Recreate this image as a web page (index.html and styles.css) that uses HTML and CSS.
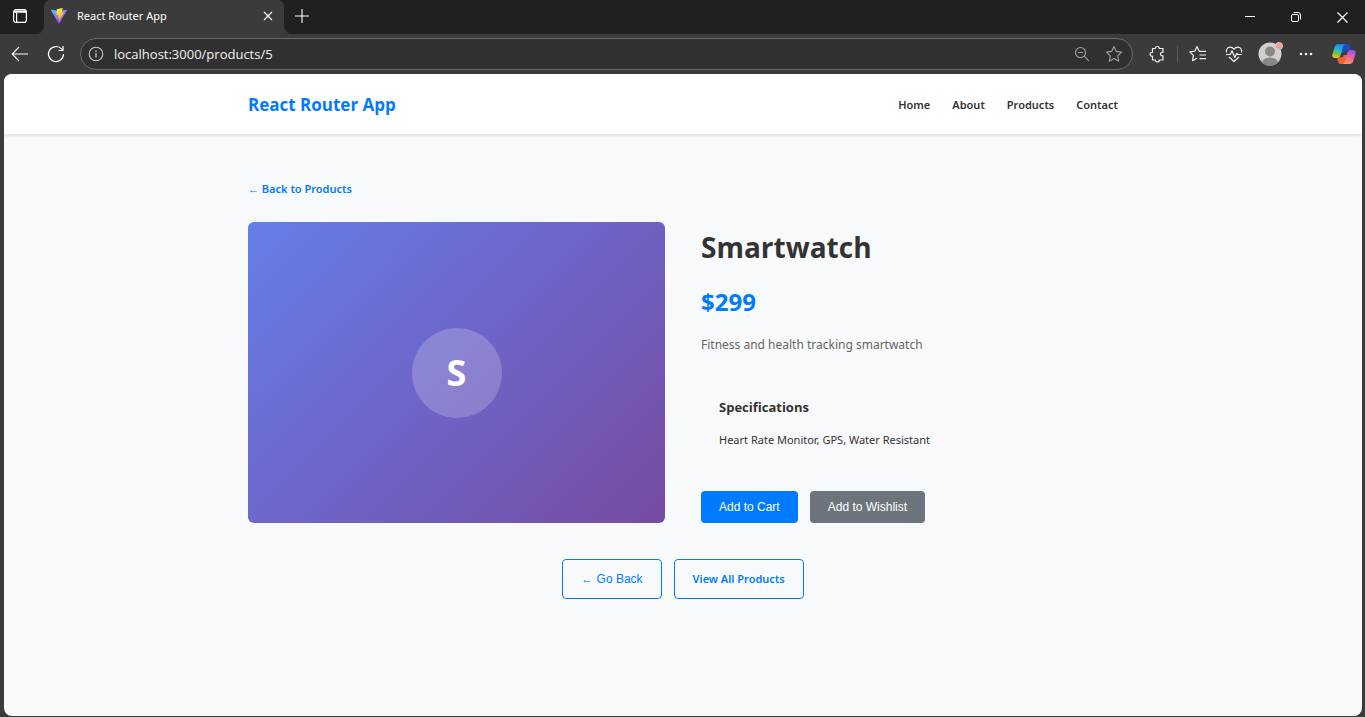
FILE: index.html
```html
<!DOCTYPE html>
<html lang="en">
<head>
<meta charset="utf-8">
<title>React Router App</title>
<link rel="stylesheet" href="styles.css">
</head>
<body>
<div class="browser">
  <div class="tab-strip">
    <button class="icon-button tab-actions" aria-label="Tab actions">
      <svg width="16" height="16" viewBox="0 0 16 16" fill="none" stroke="#fff" stroke-width="1.2"><rect x="1.6" y="1.6" width="12.8" height="12.8" rx="2.5"/><path d="M2 3.2h12M2 4.2h12M4.6 5v9" /></svg>
    </button>
    <div class="tab">
      <svg width="16" height="16" viewBox="0 0 16 16"><defs><linearGradient id="va" x1="0" y1="0" x2=".6" y2="1"><stop offset="0" stop-color="#41d1ff"/><stop offset="1" stop-color="#bd34fe"/></linearGradient><linearGradient id="vb" x1=".4" y1="0" x2=".6" y2="1"><stop offset="0" stop-color="#ffea83"/><stop offset=".2" stop-color="#ffdd35"/><stop offset="1" stop-color="#ffa800"/></linearGradient></defs><path d="M15.8 2.4 8.4 15.6a.4.4 0 0 1-.7 0L.2 2.4c-.2-.3.1-.7.5-.6L8 3.1l7.3-1.3c.4-.1.7.3.5.6z" fill="url(#va)"/><path d="M11.4.1 6 1.2l-.2.2-.4 5.7c0 .2.1.3.3.2l1.5-.3c.2 0 .3.1.3.3L7 9.500c0 .2.1.3.3.3l.9-.3c.2-.1.3.1.3.3l-.7 3.400c-.1.2.2.300.3.1l4.700-9.100c.1-.2-.1-.4-.3-.3l-1.600.3c-.1 0-.3-.1-.2-.3L11.700.4c0-.2-.1-.3-.3-.3z" fill="url(#vb)"/></svg>
      <span class="tab-title">React Router App</span>
      <button class="icon-button" aria-label="Close tab"><svg width="10" height="10" viewBox="0 0 10 10" stroke="#fff" stroke-width="1.2"><path d="m1 1 8 8M9 1 1 9"/></svg></button>
    </div>
    <button class="icon-button new-tab" aria-label="New tab"><svg width="14" height="14" viewBox="0 0 14 14" stroke="#fff" stroke-width="1.1"><path d="M0 7h14M7 0v14"/></svg></button>
    <div class="window-controls">
      <button class="icon-button" aria-label="Minimize"><svg width="10" height="10" viewBox="0 0 10 10" stroke="#fff"><path d="M0 4.500h10"/></svg></button>
      <button class="icon-button" aria-label="Restore"><svg width="10" height="10" viewBox="0 0 10 10" fill="none" stroke="#fff"><rect x=".5" y="2.500" width="7" height="7" rx="1.500"/><path d="M2.500.5H7A2.500 2.500 0 0 1 9.500 3v4.500"/></svg></button>
      <button class="icon-button" aria-label="Close"><svg width="11" height="11" viewBox="0 0 11 11" stroke="#fff" stroke-width="1.200"><path d="m.5.5 10 10M10.500.5l-10 10"/></svg></button>
    </div>
  </div>
  <div class="toolbar">
    <button class="icon-button" aria-label="Back"><svg width="18" height="16" viewBox="0 0 18 16" fill="none" stroke="#fff" stroke-width="1.100"><path d="M17 8H1.500M8 1 1.200 8 8 15"/></svg></button>
    <button class="icon-button" aria-label="Refresh"><svg width="18" height="18" viewBox="0 0 18 18" fill="none" stroke="#fff" stroke-width="1.200"><path d="M16.500 9A7.500 7.500 0 1 1 14.500 3.900L16 5.500M16 1v4.500h-4.500"/></svg></button>
    <div class="address-bar">
      <svg width="16" height="16" viewBox="0 0 16 16" fill="none" stroke="#c8c8c8"><circle cx="8" cy="8" r="6.800" stroke-width="1.100"/><path d="M8 7v4.500M8 4.500V6" stroke-width="1.300"/></svg>
      <input class="address-input" type="text" aria-label="Address" value="localhost:3000/products/5">
      <button class="icon-button" aria-label="Zoom"><svg width="16" height="16" viewBox="0 0 16 16" fill="none" stroke="#a0a0a0" stroke-width="1.100"><circle cx="6.500" cy="6.500" r="5"/><path d="m10.200 10.200 4.600 4.600M4 6.500h5"/></svg></button>
      <button class="icon-button" aria-label="Favorite"><svg width="18" height="18" viewBox="0 0 18 18" fill="none" stroke="#a0a0a0" stroke-width="1.100" stroke-linejoin="round"><path d="m9 1.500 2.300 4.900 5.300.7-3.900 3.700 1 5.400L9 13.600l-4.700 2.600 1-5.400L1.400 7.100l5.300-.7z"/></svg></button>
    </div>
    <div class="toolbar-actions">
      <button class="icon-button" aria-label="Extensions"><svg width="18" height="18" viewBox="0 0 18 18" fill="none" stroke="#f0f0f0" stroke-width="1.200" stroke-linejoin="round"><path d="M4.500 3.500H7.300a2 2 0 0 1 4 0H15v3.700a1.900 1.900 0 1 0 0 3.600v4.200h-3.700a2 2 0 0 1-4 0H4.500v-3.800a2 2 0 1 1 0-3.900z"/></svg></button>
      <span class="divider"></span>
      <button class="icon-button" aria-label="Favorites list"><svg width="18" height="18" viewBox="0 0 18 18" fill="none" stroke="#f0f0f0" stroke-width="1.200" stroke-linejoin="round"><path d="M10.200 6.300 8 1.500 5.800 6.200l-5 .7 3.600 3.500-.8 5.300 4.400-2.400M10 6.300h7M10.500 10h6.500M10.500 13.700h6.500"/></svg></button>
      <button class="icon-button" aria-label="Browser essentials"><svg width="18" height="18" viewBox="0 0 18 18" fill="none" stroke="#f0f0f0" stroke-width="1.200" stroke-linejoin="round"><path d="M1.500 7.500C.8 4.500 2.600 2.200 5 2.200c1.800 0 3 .8 4 2 1-1.200 2.200-2 4-2 2.400 0 4.200 2.300 3.500 5.300M4 12l5 4.500 5-4.500M1 9.500h4.200L7 5.800l2.800 6.700 2-4 1 1H17"/></svg></button>
      <button class="icon-button" aria-label="Profile"><svg width="26" height="24" viewBox="0 0 26 24"><defs><clipPath id="pc"><circle cx="13" cy="12" r="11.500"/></clipPath></defs><circle cx="13" cy="12" r="11.500" fill="#d2d0ce"/><g clip-path="url(#pc)" fill="#8a8886"><circle cx="13" cy="9.500" r="5"/><ellipse cx="13" cy="21" rx="8" ry="5.500"/></g><circle cx="22" cy="4" r="3.500" fill="#ff9a94" stroke="#d2d0ce"/></svg></button>
      <button class="icon-button" aria-label="Settings and more"><svg width="14" height="4" viewBox="0 0 14 4" fill="#f0f0f0"><circle cx="2" cy="2" r="1.300"/><circle cx="7" cy="2" r="1.300"/><circle cx="12" cy="2" r="1.300"/></svg></button>
      <button class="icon-button copilot" aria-label="Copilot"><svg width="24" height="22" viewBox="0 0 24 22"><defs><linearGradient id="ca" x1=".6" y1="0" x2=".3" y2="1"><stop offset="0" stop-color="#1b7df2"/><stop offset=".4" stop-color="#26b3d5"/><stop offset=".7" stop-color="#78be45"/><stop offset="1" stop-color="#f4c20b"/></linearGradient><linearGradient id="cb" x1=".7" y1="0" x2=".3" y2="1"><stop offset="0" stop-color="#9b4eea"/><stop offset=".5" stop-color="#f066a0"/><stop offset="1" stop-color="#ff9a52"/></linearGradient></defs><path d="M11 1h4.500c1.500 0 2 1 2.500 2.500l1 4.000H15c-1.600 0-2.300 1-2.700 2.500L9 10z" fill="#1550c0"/><path d="M13 21H8.500C7 21 6.500 20 6 18.500L5 14.500h4c1.600 0 2.300-1 2.700-2.500H15z" fill="#f25f3a"/><path d="M6.500 1H14c-1.800 0-2.500 1.500-3 3l-2.300 8c-.5 2-1.700 3-3.200 3H3c-2.500 0-3.100-1.500-2.500-4L2.700 4C3.300 2 4.500 1 6.500 1z" fill="url(#ca)"/><path d="M17.500 21H10c1.800 0 2.500-1.500 3-3l2.300-8c.5-2 1.700-3 3.200-3H21c2.500 0 3.100 1.500 2.500 4l-2.200 7c-.6 2-1.800 3-3.800 3z" fill="url(#cb)"/></svg></button>
    </div>
  </div>
  <div class="page">
    <header class="site-header">
      <div class="container header-inner">
        <a class="brand" href="#">React Router App</a>
        <nav class="site-nav">
          <a href="#">Home</a>
          <a href="#">About</a>
          <a href="#">Products</a>
          <a href="#">Contact</a>
        </nav>
      </div>
    </header>
    <main class="container content">
      <a class="back-link" href="#"><span class="arrow">←</span> Back to Products</a>
      <div class="product">
        <div class="product-image"><span class="product-initial">S</span></div>
        <section class="product-info">
          <h1>Smartwatch</h1>
          <p class="price">$299</p>
          <p class="description">Fitness and health tracking smartwatch</p>
          <div class="specs">
            <h2>Specifications</h2>
            <p>Heart Rate Monitor, GPS, Water Resistant</p>
          </div>
          <div class="actions">
            <button class="button button-primary">Add to Cart</button>
            <button class="button button-secondary">Add to Wishlist</button>
          </div>
        </section>
      </div>
      <div class="page-actions">
        <button class="outline">← Go Back</button>
        <a class="outline outline-link" href="#">View All Products</a>
      </div>
    </main>
  </div>
</div>
</body>
</html>
```
FILE: styles.css
```css
* { box-sizing: border-box; }
body {
  margin: 0;
  font-family: "Noto Sans", "Open Sans", sans-serif;
  font-size: 11px;
  line-height: 20px;
  color: #333;
}
h1, h2, p { margin: 0; }
a { text-decoration: none; color: #007bff; }
button { font-family: "Liberation Sans", Arial, sans-serif; cursor: pointer; }
svg { display: block; flex: none; }

.browser {
  display: flex;
  flex-direction: column;
  min-height: 100vh;
  background: #3b3b3b;
}
.icon-button {
  display: flex;
  align-items: center;
  justify-content: center;
  padding: 0;
  border: 0;
  background: none;
}
.tab-strip {
  display: flex;
  height: 34px;
  background: #3b3b3b;
}
.tab-actions {
  width: 44px;
  padding: 0 4px 2px 0;
  border-bottom-right-radius: 8px;
  background: #202020;
}
.tab {
  display: flex;
  align-items: center;
  gap: 10px;
  width: 240px;
  padding: 0 11px 2px 7px;
  background: radial-gradient(circle at 8px 8px, #3b3b3b 8px, #202020 9px) 0 0 / 8px 8px no-repeat,
    radial-gradient(circle at 0 8px, #3b3b3b 8px, #202020 9px) 100% 0 / 8px 8px no-repeat,
    #3b3b3b;
  color: #fff;
}
.tab-title { flex: 1; }
.new-tab {
  width: 35px;
  padding-bottom: 2px;
  border-bottom-left-radius: 8px;
  background: #202020;
}
.window-controls {
  display: flex;
  flex: 1;
  justify-content: flex-end;
  background: #202020;
}
.window-controls .icon-button { width: 46px; }

.toolbar {
  display: flex;
  align-items: center;
  gap: 18px;
  height: 40px;
  padding: 0 1px 0 11px;
}
.address-bar {
  display: flex;
  flex: 1;
  align-items: center;
  gap: 10px;
  height: 32px;
  margin-left: -3px;
  padding: 0 9px 0 7px;
  border: 1px solid #696969;
  border-radius: 16px;
  background: #303030;
}
.address-input {
  flex: 1;
  min-width: 0;
  padding: 0;
  border: 0;
  outline: 0;
  background: none;
  color: #f2f2f2;
  font: 13px "Open Sans", sans-serif;
}
.address-bar .icon-button { margin-left: 5px; }
.toolbar-actions { display: flex; align-items: center; margin-left: -12px; }
.toolbar-actions .icon-button { width: 36px; }
.toolbar-actions .copilot { width: 40px; }
.divider { width: 1px; height: 16px; margin: 0 2px; background: #5c5c5c; }

.page {
  flex: 1;
  margin: 0 3px 1px 4px;
  overflow: hidden;
  border-radius: 8px;
  background: #f8f9fb;
}
.container { max-width: 870px; margin: 0 auto; }
.site-header { background: #fff; box-shadow: 0 1px 3px rgba(0, 0, 0, 0.16); }
.header-inner {
  display: flex;
  align-items: center;
  justify-content: space-between;
  height: 60px;
  padding-top: 2px;
}
.brand { font-family: "Open Sans", sans-serif; font-size: 17px; font-weight: 700; }
.site-nav { display: flex; gap: 22px; }
.site-nav a { color: #333; font-weight: 600; }
.content { padding: 45px 0; }
.back-link { display: block; font-weight: 600; }
.arrow { font-family: "Liberation Sans", Arial, sans-serif; font-weight: 400; }
.product {
  display: grid;
  grid-template-columns: 1fr 1fr;
  gap: 36px;
  margin-top: 23px;
}
.product-image {
  display: flex;
  align-items: center;
  justify-content: center;
  border-radius: 6px;
  background: linear-gradient(135deg, #667eea, #764ba2);
}
.product-initial {
  display: flex;
  align-items: center;
  justify-content: center;
  width: 90px;
  height: 90px;
  border-radius: 50%;
  background: rgba(255, 255, 255, 0.2);
  color: #fff;
  font-family: "Open Sans", sans-serif;
  font-size: 36px;
  font-weight: 700;
}
h1 { font-family: "Open Sans", sans-serif; font-size: 28px; line-height: 50px; }
.price {
  margin-top: 12px;
  color: #007bff;
  font-family: "Open Sans", sans-serif;
  font-size: 24px;
  font-weight: 700;
  line-height: 36px;
}
.description { margin-top: 15px; color: #666; font-size: 12px; }
.specs { padding: 42px 18px 41px; }
.specs h2 { font-family: "Open Sans", sans-serif; font-size: 13px; line-height: 20px; }
.specs p { margin-top: 13px; }
.actions { display: flex; gap: 12px; }
.button {
  height: 32px;
  padding: 0 18px;
  border: 0;
  border-radius: 4px;
  color: #fff;
  font-size: 12px;
}
.button-primary { background: #007bff; }
.button-secondary { background: #6c757d; }
.page-actions { display: flex; justify-content: center; gap: 12px; margin-top: 36px; }
.outline {
  height: 40px;
  padding: 0 18px;
  border: 1px solid #007bff;
  border-radius: 4px;
  background: transparent;
  color: #007bff;
  font-size: 12px;
}
.outline-link { display: flex; align-items: center; font-size: 11px; font-weight: 600; }
```
